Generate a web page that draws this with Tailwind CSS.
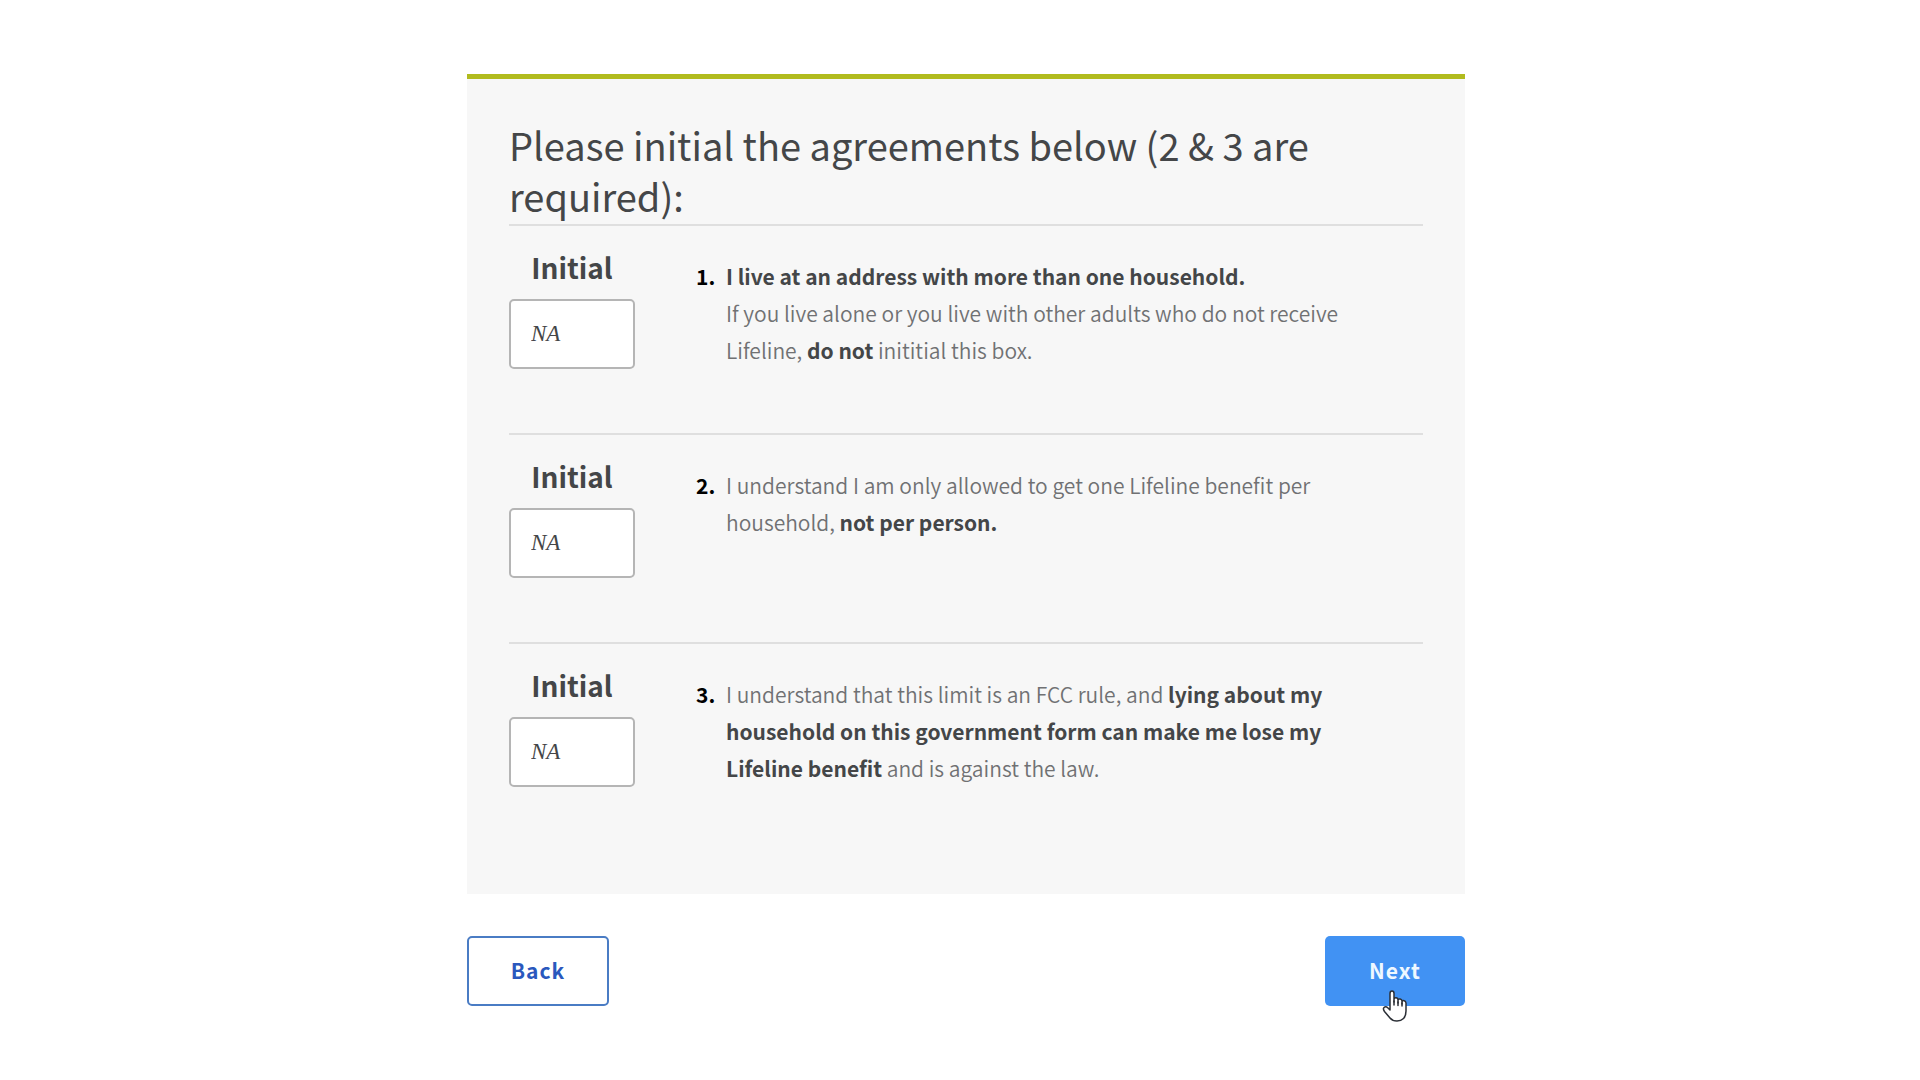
<!DOCTYPE html>
<html lang="en">
<head>
    <meta charset="UTF-8">
    <meta name="viewport" content="width=device-width, initial-scale=1.0">
    <title>Household Worksheet</title>
    <script src="https://cdn.jsdelivr.net/npm/@tailwindcss/browser@4"></script>
</head>
<body class="bg-white font-['Noto_Sans_CJK_SC','Noto_Sans',sans-serif] text-[#444648]">
    <form class="mx-auto w-full max-w-[1010px] pl-3 pt-[74px] pb-[74px]" method="post">
        <section class="border-t-5 border-[#b1bb1e] bg-[#f7f7f7] px-[42px] pt-10 pb-[43px]">
            <div class="border-b-2 border-[#dfdfdf] pb-[3px]">
                <h1 class="text-[38px] leading-[51px]">Please initial the agreements below (2 &amp; 3 are required):</h1>
            </div>

            <ol class="text-[21px] leading-[37px] font-[350]">
                <li class="flex min-h-[209px] border-b-2 border-[#dfdfdf]">
                    <div class="w-[126px] pt-[21px]">
                        <label for="initial1" class="block text-center text-[28px] leading-10 font-bold">Initial</label>
                        <input type="text" id="initial1" name="initial1" value="NA" class="mt-3 block h-[70px] w-full rounded-[5px] border-2 border-[#b5b5b5] bg-white px-5 font-['Liberation_Serif',serif] text-[23px] font-normal italic focus:outline-none">
                    </div>
                    <span class="ml-[61px] w-[30px] pt-8 font-bold text-black">1.</span>
                    <p class="max-w-[640px] flex-1 pt-8 text-[#707173]"><strong class="font-bold text-[#444648]">I live at an address with more than one household.</strong><br>
                    If you live alone or you live with other adults who do not receive Lifeline, <strong class="font-bold text-[#444648]">do not</strong> inititial this box.</p>
                </li>
                <li class="flex min-h-[209px] border-b-2 border-[#dfdfdf]">
                    <div class="w-[126px] pt-[21px]">
                        <label for="initial2" class="block text-center text-[28px] leading-10 font-bold">Initial</label>
                        <input type="text" id="initial2" name="initial2" value="NA" class="mt-3 block h-[70px] w-full rounded-[5px] border-2 border-[#b5b5b5] bg-white px-5 font-['Liberation_Serif',serif] text-[23px] font-normal italic focus:outline-none">
                    </div>
                    <span class="ml-[61px] w-[30px] pt-8 font-bold text-black">2.</span>
                    <p class="max-w-[640px] flex-1 pt-8 text-[#707173]">I understand I am only allowed to get one Lifeline benefit per household, <strong class="font-bold text-[#444648]">not per person.</strong></p>
                </li>
                <li class="flex min-h-[207px]">
                    <div class="w-[126px] pt-[21px]">
                        <label for="initial3" class="block text-center text-[28px] leading-10 font-bold">Initial</label>
                        <input type="text" id="initial3" name="initial3" value="NA" class="mt-3 block h-[70px] w-full rounded-[5px] border-2 border-[#b5b5b5] bg-white px-5 font-['Liberation_Serif',serif] text-[23px] font-normal italic focus:outline-none">
                    </div>
                    <span class="ml-[61px] w-[30px] pt-8 font-bold text-black">3.</span>
                    <p class="max-w-[640px] flex-1 pt-8 text-[#707173]">I understand that this limit is an FCC rule, and <strong class="font-bold text-[#444648]">lying about my household on this government form can make me lose my Lifeline benefit</strong> and is against the law.</p>
                </li>
            </ol>
        </section>

        <div class="mt-[42px] flex justify-between text-[21px] font-bold tracking-wider">
            <button type="button" class="h-[70px] w-[142px] cursor-pointer rounded-[5px] border-2 border-[#4a7cc4] bg-white text-[#2a58bd]">Back</button>
            <div class="relative">
                <button type="submit" class="h-[70px] w-[140px] cursor-pointer rounded-[5px] bg-[#4192f3] text-[#eef8ff]">Next</button>
                <!-- hand pointer -->
                <svg class="pointer-events-none absolute top-[53px] left-[57px] h-[34px] w-[26px]" viewBox="0 0 26 34" fill="white" stroke="#2b2f36" stroke-width="1.5" stroke-linejoin="round" stroke-linecap="round" aria-hidden="true">
                    <path d="M8 21V4.500Q8 2 10 2T12 4.500V13V10.500Q12.300 8.500 14.200 8.800T16 11V14V11.500Q16.400 9.600 18.200 10T20 12V15V12.800Q20.600 11.200 22.200 11.700T24 14V22Q24 27 21.500 29.500Q19 32 15 32Q10.500 32 8 29L2.500 22.500Q0.500 19.500 2.200 18.300T6 19Z"/>
                    <path fill="none" d="M12 12v4M16 13v3.500M20 14v3"/>
                </svg>
            </div>
        </div>
    </form>
</body>
</html>
